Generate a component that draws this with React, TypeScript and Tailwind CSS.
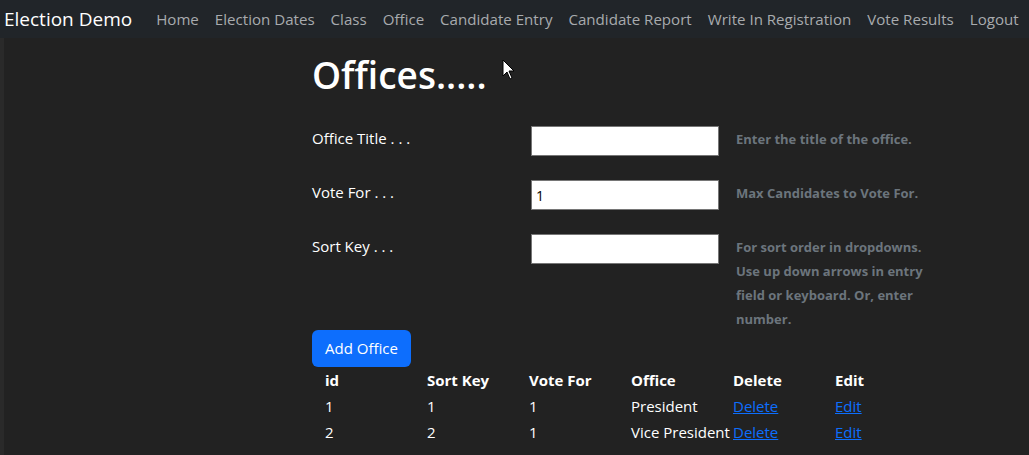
import React from "react";

const navLinks = [
  "Home",
  "Election Dates",
  "Class",
  "Office",
  "Candidate Entry",
  "Candidate Report",
  "Write In Registration",
  "Vote Results",
  "Logout",
];

const offices = [
  { id: 1, sortKey: 1, voteFor: 1, office: "President" },
  { id: 2, sortKey: 2, voteFor: 1, office: "Vice President" },
];

function FormRow({
  label,
  value,
  help,
}: {
  label: string;
  value?: string;
  help: React.ReactNode;
}) {
  return (
    <div className="flex items-start">
      <label className="w-[219px] text-[15px] leading-6 text-white">{label}</label>
      <input
        type="text"
        defaultValue={value}
        className="h-[30px] w-[188px] border border-[#767676] bg-white px-[4px] text-[14px] text-black outline-none"
      />
      <div className="ml-[17px] w-[196px] pt-[1px] text-[13px] font-bold leading-6 text-[#6c757d]">{help}</div>
    </div>
  );
}

export default function App() {
  return (
    <div
      className="relative min-h-[455px] bg-[#222222] text-white"
      style={{ fontFamily: '"Open Sans", "Noto Sans", sans-serif' }}
    >
      {/* top nav */}
      <nav className="flex h-[38px] items-center bg-[#212529] pl-[4px]">
        <span className="mr-[16px] text-[19px] leading-6 text-white">Election Demo</span>
        <ul className="flex">
          {navLinks.map((l) => (
            <li key={l} className="px-[8px] text-[15.1px] leading-6 text-[#a8abae]">
              {l}
            </li>
          ))}
        </ul>
      </nav>

      <div className="absolute left-0 top-[38px] h-[417px] w-[4px] bg-[#2a2a2a]" />

      <main className="ml-[312px] pt-[11px]">
        <h1 className="text-[37px] font-semibold leading-[52px] text-white">Offices.....</h1>

        <div className="mt-[25px] flex flex-col gap-[24px]">
          <FormRow label="Office Title . . ." help="Enter the title of the office." />
          <FormRow label="Vote For . . ." value="1" help="Max Candidates to Vote For." />
          <FormRow
            label="Sort Key . . ."
            help="For sort order in dropdowns. Use up down arrows in entry field or keyboard. Or, enter number."
          />
        </div>

        <button
          type="button"
          className="-mt-px h-[37px] rounded-[6px] bg-[#0d6efd] px-[13px] text-[15px] text-white"
        >
          Add Office
        </button>

        <table className="ml-[13px] table-fixed border-collapse text-[15px] leading-[26px]">
          <thead>
            <tr className="text-left">
              {["id", "Sort Key", "Vote For", "Office", "Delete", "Edit"].map((h) => (
                <th key={h} className="w-[102px] p-0 font-bold">
                  {h}
                </th>
              ))}
            </tr>
          </thead>
          <tbody>
            {offices.map((o) => (
              <tr key={o.id}>
                <td className="p-0">{o.id}</td>
                <td className="p-0">{o.sortKey}</td>
                <td className="p-0">{o.voteFor}</td>
                <td className="whitespace-nowrap p-0">{o.office}</td>
                <td className="p-0">
                  <a href="#" className="text-[#0d6efd] underline">Delete</a>
                </td>
                <td className="p-0">
                  <a href="#" className="text-[#0d6efd] underline">Edit</a>
                </td>
              </tr>
            ))}
          </tbody>
        </table>
      </main>

      {/* mouse pointer */}
      <svg className="absolute left-[502px] top-[59px]" width="14" height="22" viewBox="0 0 14 22">
        <path d="M1 1 L1 17 L5 13 L8 20 L10 19 L7 12 L12 12 Z" fill="#ffffff" stroke="#000000" strokeWidth="1" />
      </svg>
    </div>
  );
}
